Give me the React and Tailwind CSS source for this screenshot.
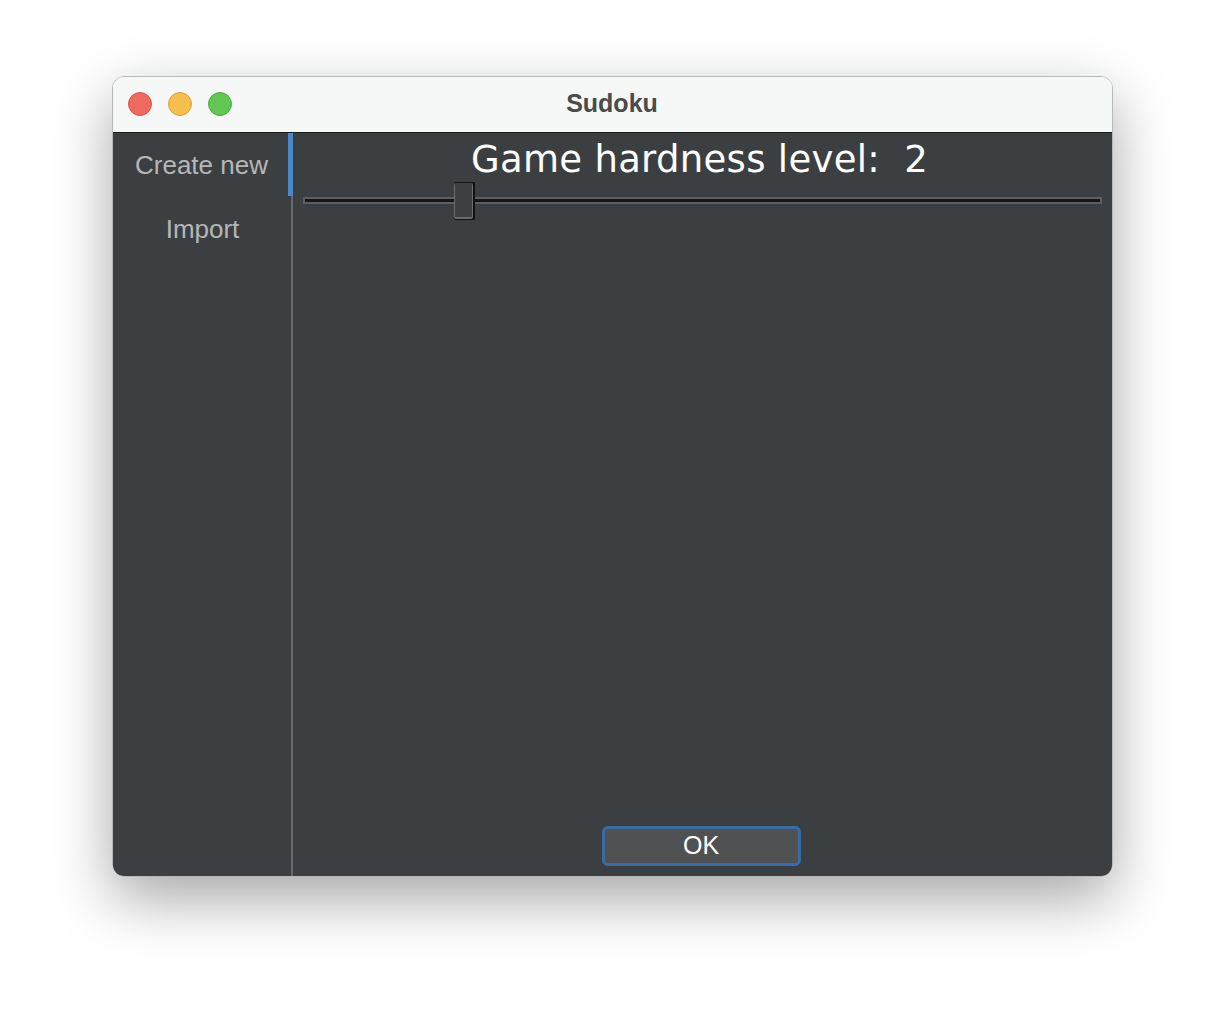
import React from 'react';

function TrafficLights() {
  return (
    <div className="absolute left-[15px] top-[15px] flex gap-[16px]">
      <span className="w-[24px] h-[24px] rounded-full bg-[#ee6a5e] border border-[#d4574c]" />
      <span className="w-[24px] h-[24px] rounded-full bg-[#f5be4f] border border-[#d9a23b]" />
      <span className="w-[24px] h-[24px] rounded-full bg-[#62c554] border border-[#50a943]" />
    </div>
  );
}

function Slider() {
  return (
    <div className="relative h-[40px] mx-[10px] mt-[1px]">
      <div className="absolute left-0 right-0 top-[15px] h-[7px] bg-[#5c5e60]">
        <div className="h-[3px] mt-[2px] mx-[2px] bg-[#161616]" />
      </div>
      <div className="absolute left-[151px] top-0 w-[21px] h-[38px] bg-[#111] rounded-[2px]">
        <div className="w-[19px] h-[36px] bg-[#6a6c6e] rounded-[2px]">
          <div className="ml-[1px] mt-[1px] w-[17px] h-[34px] bg-[#3e4042]" />
        </div>
      </div>
    </div>
  );
}

export default function App() {
  return (
    <div className="w-[1224px] h-[1024px] bg-white flex items-start justify-center pt-[76px]" style={{ fontFamily: '"Liberation Sans", Arial, sans-serif' }}>
      <div className="w-[1001px] h-[801px] rounded-[12px] overflow-hidden border border-[#b8b8b8] shadow-[0_22px_60px_rgba(0,0,0,0.35)] flex flex-col">
        <div className="relative h-[56px] bg-[#f6f7f7] border-b border-[#1e1e1e] flex items-center justify-center">
          <TrafficLights />
          <span className="text-[25px] font-bold text-[#4b4b4b] mt-[-1px]">Sudoku</span>
        </div>
        <div className="flex-1 flex bg-[#3c3f41]">
          <div className="w-[175px] flex flex-col pl-[3px]">
            <div className="h-[64px] flex items-center justify-center text-[26px] text-[#b6b6b6]">Create new</div>
            <div className="h-[64px] flex items-center justify-center text-[26px] text-[#b6b6b6] pl-[2px]">Import</div>
          </div>
          <div className="w-[5px] flex flex-col">
            <div className="h-[63px] bg-[#4a88c7]" />
            <div className="flex-1 ml-[3px] w-[2px] bg-[#67696b]" />
          </div>
          <div className="flex-1 flex flex-col">
            <div className="h-[48px] flex items-center justify-center text-[37px] text-white pt-[6px] pr-[5px]" style={{ fontFamily: '"DejaVu Sans", sans-serif', letterSpacing: '0.3px' }}>
              Game hardness level:&nbsp; 2
            </div>
            <Slider />
            <div className="flex-1" />
            <div className="flex justify-center pb-[10px] pr-[2px]">
              <div className="w-[199px] h-[40px] rounded-[6px] border-[3px] border-[#3d6aa0] bg-[#505153] flex items-center justify-center text-[25px] text-white">
                OK
              </div>
            </div>
          </div>
        </div>
      </div>
    </div>
  );
}
